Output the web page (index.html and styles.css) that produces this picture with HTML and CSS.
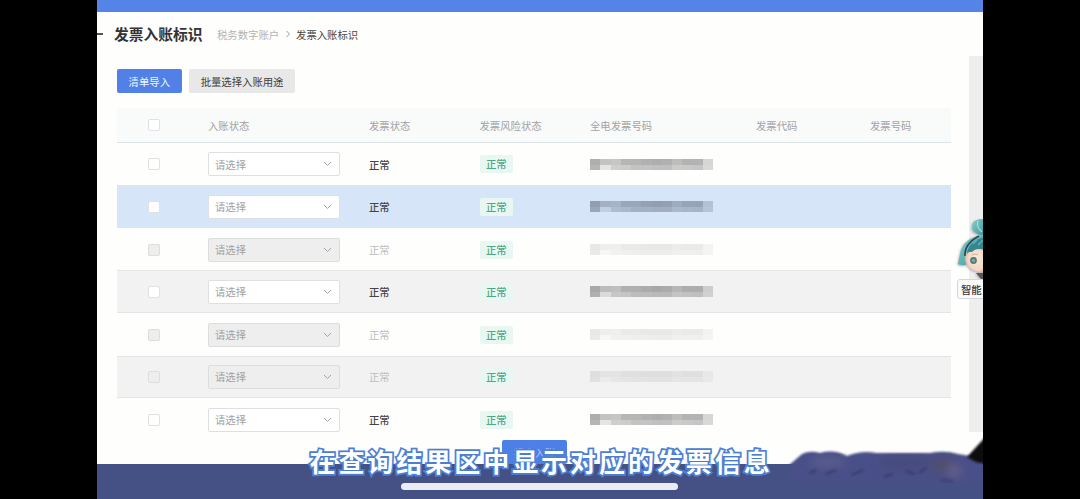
FILE: index.html
```html
<!DOCTYPE html>
<html lang="zh-CN">
<head>
  <meta charset="UTF-8">
  <title>发票入账标识</title>
  <link rel="stylesheet" href="styles.css">
</head>
<body>
  <div class="screen">
    <div class="top-bar"></div>

    <div class="page-header">
      <span class="back-line"></span>
      <h1>发票入账标识</h1>
      <span class="crumb">税务数字账户</span>
      <svg class="crumb-arrow" viewBox="0 0 6 8"><path d="M1.5 1 L4.5 4 L1.5 7"/></svg>
      <span class="crumb current">发票入账标识</span>
    </div>

    <div class="main">
      <div class="content">
        <div class="toolbar">
          <button class="btn primary">清单导入</button>
          <button class="btn">批量选择入账用途</button>
        </div>

        <div class="table">
          <div class="row head">
            <span class="check"></span>
            <span>入账状态</span>
            <span>发票状态</span>
            <span>发票风险状态</span>
            <span>全电发票号码</span>
            <span>发票代码</span>
            <span>发票号码</span>
          </div>
          <div id="rows"></div>
        </div>
      </div>
      <div class="scroll-track"></div>
    </div>

    <div class="bottom-bar"></div>

    <button class="submit-btn">提交入账</button>

    <!-- Assistant -->
    <div class="assistant">
      <svg class="avatar" viewBox="0 0 26 62">
        <defs>
          <radialGradient id="skin" cx="60%" cy="45%" r="65%">
            <stop offset="0" stop-color="#fbe9da"/>
            <stop offset="0.7" stop-color="#f3d6c3"/>
            <stop offset="1" stop-color="#c99a86"/>
          </radialGradient>
          <linearGradient id="hair" x1="0" y1="0" x2="1" y2="1">
            <stop offset="0" stop-color="#86cfcf"/>
            <stop offset="1" stop-color="#3a959c"/>
          </linearGradient>
        </defs>
        <path d="M14 9 Q14 3 19 2 L22 1 H27 V17 Q22 18 18 15 Q14 13 14 9Z" fill="url(#hair)"/>
        <path d="M20 3 Q18 9 24 14" fill="none" stroke="#a9dfdf" stroke-width="1.2"/>
        <path d="M0 46 Q1 40 3 32 Q8 18 27 17 V30 L10 36 L8 47 Q3 48 0 46Z" fill="url(#hair)"/>
        <path d="M7 38 Q9 29 27 29 V55 Q14 54 9 47 Q6 43 7 38Z" fill="url(#skin)"/>
        <path d="M9 36 Q10 23 27 19 V32 Q18 29 14 34 Q11 33 9 36Z" fill="#35868f"/>
        <path d="M7 38 Q6 26 21 18" fill="none" stroke="#34434d" stroke-width="1.6"/>
        <path d="M15 26 L19 22 M20 27 L25 22" stroke="#58b9bd" stroke-width="1.2"/>
        <path d="M14 37 Q17 35 20 37" fill="none" stroke="#c9a48d" stroke-width="0.8"/>
        <circle cx="15.5" cy="42.5" r="3.4" fill="#4c7d79"/>
        <circle cx="15.5" cy="42.5" r="1.7" fill="#7fa8a2"/>
        <path d="M18 55 L27 55 V61 L23 61Z" fill="#55585e"/>
      </svg>
      <div class="assistant-label">智能</div>
    </div>

    <svg class="smudge" viewBox="0 0 203 69">
      <defs>
        <filter id="soft"><feGaussianBlur stdDeviation="1"/></filter>
        <filter id="softer"><feGaussianBlur stdDeviation="4"/></filter>
      </defs>
      <path d="M8 36 L22 24 Q30 20 40 23 Q54 19 67 26 Q82 20 96 23 H150 Q165 20 178 24 L190 26 L210 26 V52 H8Z" fill="#4a5088" filter="url(#soft)"/>
      <g filter="url(#softer)">
        <ellipse cx="48" cy="32" rx="18" ry="6" fill="#585b8c"/>
        <ellipse cx="125" cy="33" rx="26" ry="7" fill="#474c7b"/>
        <ellipse cx="164" cy="36" rx="13" ry="9" fill="#504d70"/>
        <ellipse cx="174" cy="41" rx="8" ry="7" fill="#625d89"/>
      </g>
      <path d="M187 27 L208 4 V34 L196 32Z" fill="#0b0b0d" filter="url(#soft)"/>
      <path d="M30 43 l6 -3 M46 44 l10 -4 M72 45 l11 -5 M104 47 l9 -3 M126 41 l9 3 M139 43 l7 -5 M161 50 l12 1" stroke="#2e3358" stroke-width="2" fill="none" opacity="0.6" filter="url(#soft)"/>
    </svg>
  </div>

  <div class="subtitle">在查询结果区中显示对应的发票信息</div>
  <div class="home-indicator"></div>

  <script src="script.js"></script>
</body>
</html>
```
FILE: styles.css
```css
* {
  box-sizing: border-box;
}

body {
  margin: 0;
  width: 1080px;
  height: 499px;
  overflow: hidden;
  position: relative;
  background: #000;
  font-family: "Noto Sans CJK SC", sans-serif;
  font-size: 10.35px;
  color: #3c3c3e;
}

.screen {
  position: relative;
  display: flex;
  flex-direction: column;
  width: 886px;
  height: 499px;
  margin-left: 97px;
  background: #fefefd;
  overflow: hidden;
}

.top-bar {
  height: 11.5px;
  background: #5384e6;
}

.page-header {
  display: flex;
  align-items: center;
  height: 44.5px;
  padding-top: 1px;
}

.back-line {
  width: 6px;
  height: 2px;
  margin-right: 11px;
  background: #555;
}

h1 {
  margin: 0 14.5px 0 0;
  font-size: 14.75px;
  font-weight: 700;
  line-height: 20px;
  color: #333335;
}

.crumb {
  color: #b4b4b5;
}

.crumb.current {
  color: #464648;
}

.crumb-arrow {
  width: 6px;
  height: 8px;
  margin: 0 5.5px;
  fill: none;
  stroke: #9c9c9d;
}

.main {
  display: flex;
  justify-content: space-between;
  height: 408px;
}

.content {
  padding: 13px 0 0 20px;
}

.toolbar {
  display: flex;
  gap: 7.5px;
  margin-bottom: 15px;
}

.btn {
  height: 24px;
  padding: 0 11.6px;
  border: 0;
  border-radius: 2px;
  background: #e8e8e8;
  color: #3f3f41;
  font: inherit;
}

.btn.primary {
  background: #5180e6;
  color: #f2f6ff;
}

.table {
  width: 834px;
}

.row {
  display: grid;
  grid-template-columns: 91px 161px 110.5px 110.5px 166px 114px 81px;
  align-items: center;
  height: 42.6px;
  padding-top: 1px;
}

.row.head {
  height: 34.6px;
  padding-top: 1px;
  background: #f9fafa;
  border-bottom: 1px solid #dde4e7;
  color: #a3a3a4;
}

.row.selected {
  background: #d7e5f8;
}

.row.striped {
  padding-top: 0;
  background: #f2f2f2;
  border-top: 1px solid #e4e4e4;
  border-bottom: 1px solid #e4e4e4;
}

.check {
  width: 12px;
  height: 12px;
  margin-left: 31px;
  border: 1px solid #e0e1e2;
  border-radius: 2px;
  background: #fff;
}

.select {
  display: flex;
  align-items: center;
  justify-content: space-between;
  width: 132px;
  height: 24px;
  padding: 0 7px 0 6px;
  border: 1px solid #dedfe0;
  border-radius: 2px;
  background: #fff;
  color: #a1a1a2;
}

.select svg {
  width: 9px;
  height: 6px;
  fill: none;
  stroke: #a3a3a4;
}

.disabled .check,
.disabled .select {
  background: #eeeeee;
  border-color: #dddddd;
}

.state {
  color: #444446;
  font-weight: 500;
}

.disabled .state {
  color: #bdbdbe;
  font-weight: 400;
}

.tag {
  justify-self: start;
  padding: 0 6.5px;
  border-radius: 2px;
  background: #e9f7f2;
  color: #4fa888;
  font-weight: 500;
  line-height: 18px;
}

.mosaic {
  display: grid;
  grid-template-columns: repeat(12, 1fr);
  grid-template-rows: 6px 5px;
  width: 123px;
}

.mosaic i {
  background: #636365;
}

.selected .mosaic i {
  background: #525b70;
}

.disabled .mosaic {
  opacity: 0.27;
}

.scroll-track {
  width: 14px;
  height: 376px;
  background: #eeeeee;
}

.bottom-bar {
  flex: 1;
  background: #455184;
}

.submit-btn {
  position: absolute;
  left: 405px;
  top: 440px;
  width: 65px;
  height: 24px;
  padding: 0;
  border: 0;
  border-radius: 2px;
  background: #4d7fe9;
  color: #a9c3fb;
  font: inherit;
}

.assistant {
  position: absolute;
  left: 861px;
  top: 218px;
  width: 60px;
}

.avatar {
  display: block;
  width: 26px;
  height: 62px;
  filter: drop-shadow(-1px 1px 1px rgba(0, 0, 0, 0.25));
}

.assistant-label {
  position: relative;
  margin: -1px 0 0 -1px;
  height: 20px;
  padding-left: 3px;
  border: 1px solid #d4d7da;
  border-radius: 3px;
  background: #fafafa;
  line-height: 19px;
  font-weight: 500;
  white-space: nowrap;
}

.smudge {
  position: absolute;
  left: 683px;
  top: 430px;
  width: 203px;
  height: 69px;
}

.subtitle {
  position: absolute;
  left: 309.5px;
  top: 442px;
  font-size: 26px;
  font-weight: 700;
  line-height: 38px;
  letter-spacing: 2.95px;
  white-space: nowrap;
  color: #fff;
  -webkit-text-stroke: 3.5px #4f83d6;
  paint-order: stroke fill;
  text-shadow: 0 0 2px #4474c4;
}

.home-indicator {
  position: absolute;
  left: 401px;
  top: 483px;
  width: 277px;
  height: 6.5px;
  border-radius: 4px;
  background: #ebebf4;
}
```
FILE: script.js
```js
const rows = ['', 'selected', 'disabled', 'striped', 'disabled', 'striped disabled', ''];

// opacity of each mosaic block, top line then bottom line
const blocks = [
  0.52, 0.38, 0.36, 0.46, 0.46, 0.5, 0.52, 0.5, 0.42, 0.48, 0.48, 0.26,
  0.46, 0.16, 0.3, 0.32, 0.38, 0.38, 0.4, 0.4, 0.32, 0.34, 0.36, 0.24
];
const mosaic = blocks.map(o => `<i style="opacity:${o}"></i>`).join('');

document.getElementById('rows').innerHTML = rows.map(type => `
  <div class="row ${type}">
    <span class="check"></span>
    <div class="select">请选择<svg viewBox="0 0 9 6"><path d="M1 1 L4.5 4.5 L8 1"/></svg></div>
    <span class="state">正常</span>
    <span class="tag">正常</span>
    <div class="mosaic">${mosaic}</div>
  </div>
`).join('');
```
